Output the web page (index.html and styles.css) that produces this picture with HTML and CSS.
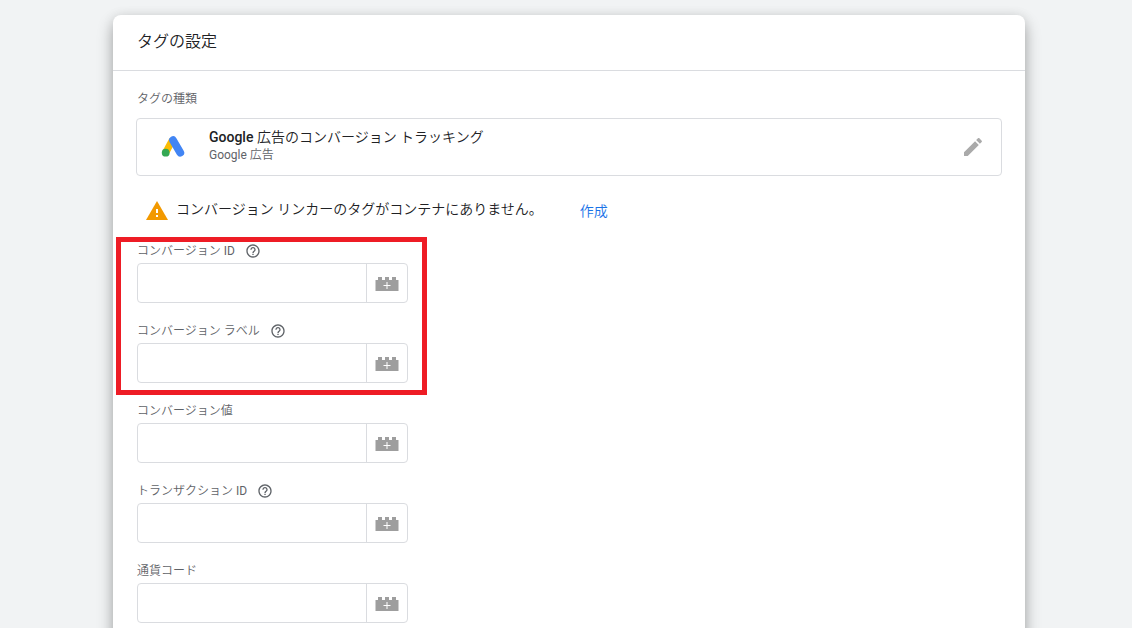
FILE: index.html
```html
<!DOCTYPE html>
<html lang="ja">
<head>
<meta charset="utf-8">
<title>タグの設定</title>
<link rel="stylesheet" href="styles.css">
</head>
<body>
<svg class="sprite" aria-hidden="true">
  <symbol id="help" viewBox="0 0 24 24"><path d="M11 18h2v-2h-2v2zm1-16C6.48 2 2 6.48 2 12s4.480 10 10 10 10-4.480 10-10S17.520 2 12 2zm0 18c-4.410 0-8-3.590-8-8s3.590-8 8-8 8 3.590 8 8-3.590 8-8 8zm0-14c-2.210 0-4 1.790-4 4h2c0-1.100.9-2 2-2s2 .9 2 2c0 2-3 1.750-3 5h2c0-2.250 3-2.500 3-5 0-2.210-1.790-4-4-4z"/></symbol>
  <symbol id="brick" viewBox="0 0 24 14"><path fill="#9e9e9e" d="M.5 3h2.500V0h4v3h3V0h4v3h3V0h4v3h2.500v11H.5z"/><path fill="#fff" d="M11.500 5h1v3h3v1h-3v3h-1V9h-3V8h3z"/></symbol>
</svg>
<main class="card">
  <header class="card-header"><h1 class="card-title">タグの設定</h1></header>
  <div class="card-body">
    <h2 class="section-label">タグの種類</h2>
    <section class="tag-type">
      <svg class="ads-logo" viewBox="0 0 24 24" aria-hidden="true">
        <path d="M11.500 5L4.700 17.500" stroke="#fbbc04" stroke-width="7"/>
        <path d="M12 5.200L19.300 17.700" stroke="#4285f4" stroke-width="7.800" stroke-linecap="round"/>
        <circle cx="4.700" cy="17.700" r="3.900" fill="#34a853"/>
      </svg>
      <div class="tag-text">
        <div class="tag-name"><span class="brand">Google</span> 広告のコンバージョン トラッキング</div>
        <div class="tag-vendor">Google 広告</div>
      </div>
      <button class="edit" type="button" aria-label="編集"><svg class="edit-icon" viewBox="0 0 24 24"><path d="M3 17.250V21h3.750L17.810 9.940l-3.750-3.750L3 17.250zM20.710 7.040c.39-.39.39-1.020 0-1.410l-2.340-2.340c-.39-.39-1.020-.39-1.410 0l-1.830 1.830 3.750 3.750 1.830-1.830z"/></svg></button>
    </section>
    <div class="notice">
      <svg class="warning" viewBox="0 0 22 19" aria-hidden="true"><path fill="#f29900" d="M11 0l11 19H0z"/><path fill="#fff" d="M10 8h2v4h-2zM10 14h2v2h-2z"/></svg>
      <span class="notice-text">コンバージョン リンカーのタグがコンテナにありません。</span>
      <a class="create" href="#">作成</a>
    </div>
    <form class="fields">
      <div class="field-group highlighted">
        <div class="field">
          <div class="field-head"><label for="conversion-id">コンバージョン ID</label><button class="help" type="button" aria-label="ヘルプ"><svg class="help-icon"><use href="#help"/></svg></button></div>
          <div class="control"><input class="text" id="conversion-id" type="text"><button class="variable" type="button" aria-label="変数を選択"><svg class="brick"><use href="#brick"/></svg></button></div>
        </div>
        <div class="field">
          <div class="field-head"><label for="conversion-label">コンバージョン ラベル</label><button class="help" type="button" aria-label="ヘルプ"><svg class="help-icon"><use href="#help"/></svg></button></div>
          <div class="control"><input class="text" id="conversion-label" type="text"><button class="variable" type="button" aria-label="変数を選択"><svg class="brick"><use href="#brick"/></svg></button></div>
        </div>
      </div>
      <div class="field">
        <div class="field-head"><label for="conversion-value">コンバージョン値</label></div>
        <div class="control"><input class="text" id="conversion-value" type="text"><button class="variable" type="button" aria-label="変数を選択"><svg class="brick"><use href="#brick"/></svg></button></div>
      </div>
      <div class="field">
        <div class="field-head"><label for="transaction-id">トランザクション ID</label><button class="help" type="button" aria-label="ヘルプ"><svg class="help-icon"><use href="#help"/></svg></button></div>
        <div class="control"><input class="text" id="transaction-id" type="text"><button class="variable" type="button" aria-label="変数を選択"><svg class="brick"><use href="#brick"/></svg></button></div>
      </div>
      <div class="field">
        <div class="field-head"><label for="currency">通貨コード</label></div>
        <div class="control"><input class="text" id="currency" type="text"><button class="variable" type="button" aria-label="変数を選択"><svg class="brick"><use href="#brick"/></svg></button></div>
      </div>
    </form>
  </div>
</main>
</body>
</html>
```
FILE: styles.css
```css
* { box-sizing: border-box; }
body {
  margin: 0;
  padding: 15px 107px 0 113px;
  background: #f1f3f4;
  color: #202124;
  font: 14px/20px Roboto, "Noto Sans CJK JP DemiLight", "Noto Sans CJK JP", sans-serif;
}
button { padding: 0; border: 0; background: none; cursor: pointer; }
.sprite { display: none; }
.card {
  background: #fff;
  border-radius: 8px 8px 0 0;
  box-shadow: 0 8px 16px rgba(0, 0, 0, .3), 0 0 12px rgba(0, 0, 0, .08);
}
.card-header { padding: 15px 24px 16px; border-bottom: 1px solid #dadce0; }
.card-title { margin: 0; font-size: 16px; line-height: 24px; font-weight: 400; }
.card-body { padding: 20px 23px 24px; }
.section-label {
  margin: 0 1px 11px;
  font-size: 12px;
  line-height: 16px;
  font-weight: 400;
  color: #5f6368;
}
.tag-type {
  display: flex;
  align-items: center;
  min-height: 58px;
  padding: 0 16px 0 24px;
  border: 1px solid #dadce0;
  border-radius: 4px;
}
.ads-logo { width: 24px; height: 24px; flex: none; fill: none; }
.tag-text { flex: 1; margin-left: 24px; padding-bottom: 4px; }
.tag-name { line-height: 20px; }
.brand { font-weight: 500; }
.tag-vendor { font-size: 12px; line-height: 16px; color: #5f6368; }
.edit { width: 24px; height: 24px; }
.edit-icon { display: block; width: 24px; height: 24px; fill: #aaa; }
.notice { display: flex; align-items: center; margin: 23px 0 20px 10px; min-height: 24px; }
.warning { width: 22px; height: 19px; margin-bottom: 2px; }
.notice-text { margin: 0 37px 4px 8px; }
.create { color: #1a73e8; text-decoration: none; }
.fields { display: grid; gap: 20px; width: 271px; max-width: 100%; margin-left: 1px; }
.field-group { display: grid; gap: 20px; }
.highlighted { position: relative; }
.highlighted::after {
  content: "";
  position: absolute;
  inset: -6px -19px -12px -21px;
  border: 5px solid #ee1c25;
  pointer-events: none;
}
.field-head {
  display: flex;
  align-items: center;
  gap: 10px;
  height: 16px;
  margin-bottom: 4px;
  font-size: 12px;
  line-height: 16px;
  color: #5f6368;
}
.help, .help-icon { display: block; width: 16px; height: 16px; fill: #5f6368; }
.control {
  display: flex;
  height: 40px;
  border: 1px solid #dadce0;
  border-radius: 4px;
}
.text { flex: 1; min-width: 0; border: 0; padding: 0 12px; background: transparent; font: inherit; }
.variable { width: 41px; padding-top: 2px; border-left: 1px solid #dadce0; }
.brick { display: block; width: 24px; height: 14px; margin: 0 auto; }
```
